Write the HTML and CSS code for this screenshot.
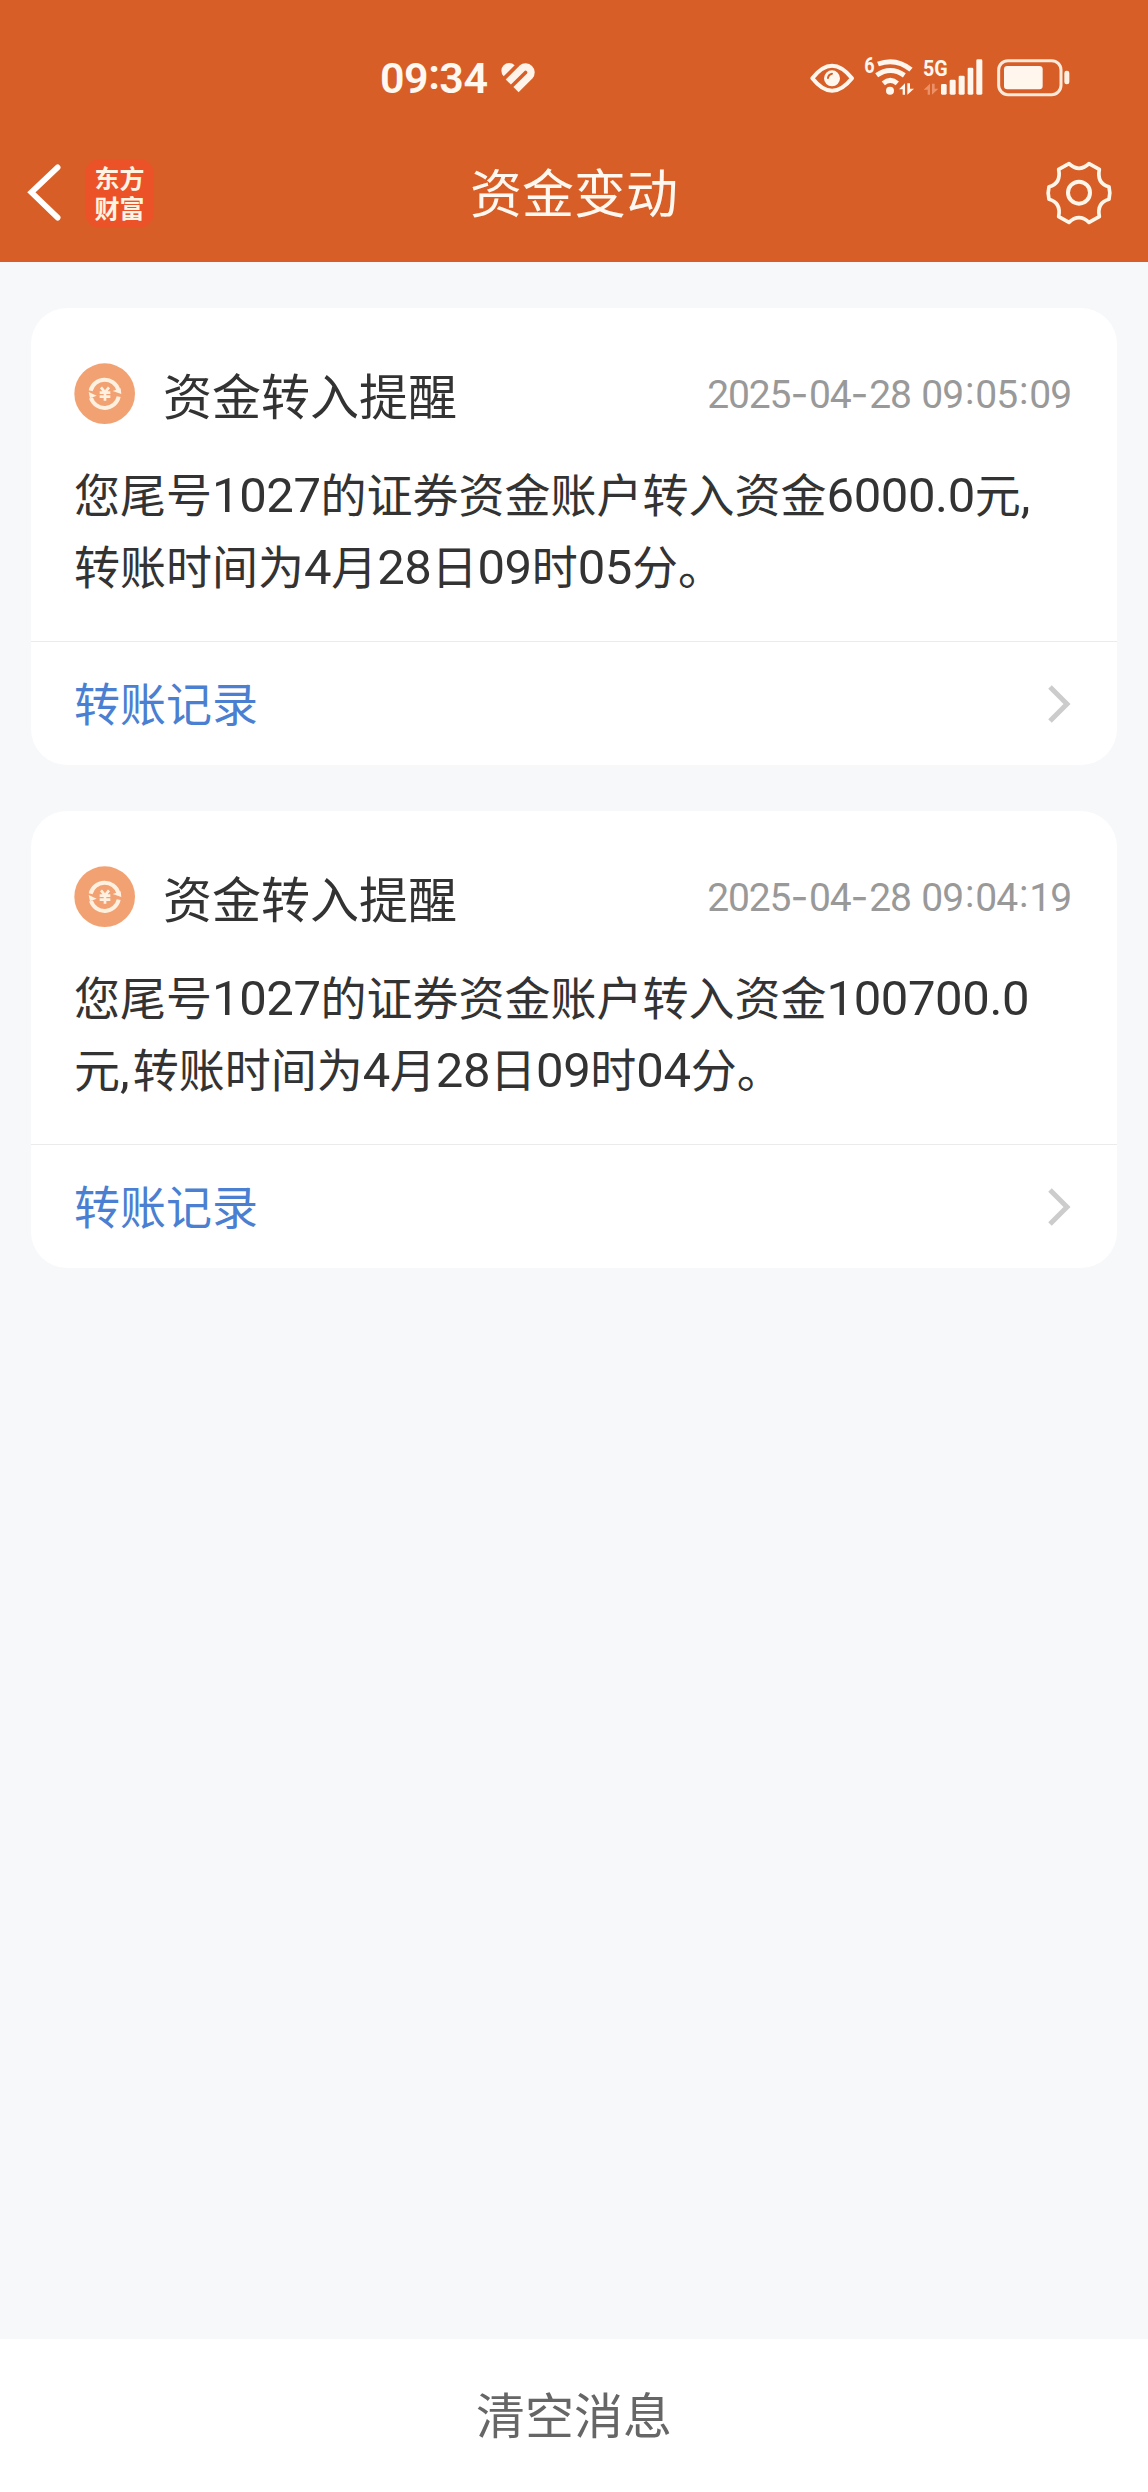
FILE: index.html
```html
<!DOCTYPE html>
<html lang="zh-CN">
<head>
  <meta charset="UTF-8">
  <meta name="viewport" content="width=device-width, initial-scale=1.0">
  <title>资金变动</title>
  <link rel="stylesheet" href="styles.css">
</head>
<body>
  <header class="header">
    <div class="status-bar">
      <div class="status-left">
        <span class="clock">09<span class="colon">:</span>34</span>
        <svg class="heart" width="36" height="32" viewBox="12 12 108 96">
          <path d="M23 55 A23 23 0 0 1 56 22Z" fill="#fff3ea"/>
          <path d="M37 72 L78 31 A16.3 16.3 0 0 1 101 54 L60 95" fill="none" stroke="#fff3ea" stroke-width="22"/>
        </svg>
      </div>
      <div class="status-right">
        <svg width="44" height="40" viewBox="60 54 132 120">
          <path d="M67 115 Q126 40 186 115 Q126 190 67 115Z" fill="none" stroke="#fff6ee" stroke-width="12" stroke-linejoin="round"/>
          <circle cx="126" cy="115" r="24" fill="#fff6ee"/>
          <path d="M114 114 Q115 103 126 101" fill="none" stroke="#d75f27" stroke-width="6" stroke-linecap="round"/>
        </svg>
        <svg class="wifi" width="51" height="40" viewBox="222 54 153 120">
          <text class="net-label" x="223" y="99" textLength="31" lengthAdjust="spacingAndGlyphs">6</text>
          <g fill="none" stroke="#fff6ee" stroke-width="15">
            <path d="M264 72 Q318 52 363 89"/>
            <path d="M260 106 Q301 77 343 106"/>
            <path d="M280 130 Q301 112 322 130"/>
          </g>
          <circle cx="300" cy="152" r="12" fill="#fff6ee"/>
          <path d="M327 148 L345 130 V164 H338 V148Z M352 130 V164 L372 146 H360 V130Z" fill="#fff6ee"/>
        </svg>
        <svg class="signal" width="60" height="40" viewBox="400 54 180 120">
          <text class="net-label" x="400" y="108" textLength="74" lengthAdjust="spacingAndGlyphs">5G</text>
          <path d="M402 149 L421 131 V164 H414 V149Z M427 131 V164 L446 146 H435 V131Z" fill="#ec9068"/>
          <g fill="#fff6ee">
            <rect x="454" y="132" width="17" height="32" rx="4"/>
            <rect x="480" y="119" width="18" height="45" rx="4"/>
            <rect x="507" y="107" width="18" height="57" rx="4"/>
            <rect x="534" y="83" width="17" height="81" rx="4"/>
            <rect x="560" y="58" width="18" height="106" rx="4"/>
          </g>
        </svg>
        <svg class="battery" width="73" height="40" viewBox="620 54 219 120">
          <rect x="625" y="62" width="187" height="102" rx="28" fill="none" stroke="#ffe9da" stroke-width="9"/>
          <rect x="641" y="78" width="116" height="70" rx="10" fill="#fff6ee"/>
          <rect x="822" y="92" width="15" height="41" rx="7" fill="#fff0e4"/>
        </svg>
      </div>
    </div>

    <nav class="nav">
      <div class="nav-left">
        <svg width="34" height="60" viewBox="80 70 102 180">
          <path d="M172 83 L93 158 L172 234" fill="none" stroke="#fff" stroke-width="17" stroke-linecap="round"/>
        </svg>
        <div class="logo">东方<br>财富</div>
      </div>
      <h1 class="nav-title">资金变动</h1>
      <svg class="gear" width="66" height="66" viewBox="78 57 198 198">
        <path d="M147 68 Q177 96 207 68 L238 85 Q230 128 267 137 Q272 156 267 175 Q230 185 238 227 L207 244 Q177 216 147 244 L116 227 Q124 185 87 175 Q82 156 87 137 Q124 128 116 85Z" fill="none" stroke="#fff6ea" stroke-width="11" stroke-linejoin="round"/>
        <circle cx="177" cy="155" r="33" fill="none" stroke="#fff6ea" stroke-width="12"/>
      </svg>
    </nav>
  </header>

  <main class="list">
    <section class="card">
      <div class="card-head">
        <svg class="coin" width="62" height="62" viewBox="0 0 186 186">
          <circle cx="92" cy="92" r="91" fill="#f2a272"/>
          <g fill="none" stroke="#fff0e0" stroke-width="12">
            <path d="M50 83 A43 43 0 0 1 133 81"/>
            <path d="M134 101 A43 43 0 0 1 51 105"/>
          </g>
          <path d="M116 84 L140 76 L142 93Z M44 87 L68 98 L48 106Z" fill="#fff0e0"/>
          <path d="M81 73 L93 88 L105 73 M93 88 V113 M77 89 H109 M77 101 H109" fill="none" stroke="#fff0e0" stroke-width="8"/>
        </svg>
        <h2 class="card-title">资金转入提醒</h2>
        <time class="card-time">2025<span class="dash">-</span>04<span class="dash">-</span>28 09<span class="colon">:</span>05<span class="colon">:</span>09</time>
      </div>
      <p class="card-text">您尾号<span class="num">1027</span>的证券资金账户转入资金<span class="num">6000.0</span>元<span class="num comma">,</span><br>转账时间为<span class="num">4</span>月<span class="num">28</span>日<span class="num">09</span>时<span class="num">05</span>分。</p>
      <a class="card-link">
        <span>转账记录</span>
        <svg width="24" height="40" viewBox="0 0 24 40">
          <path d="M3 3 L20 20 L3 37" fill="none" stroke="#ccc" stroke-width="5"/>
        </svg>
      </a>
    </section>

    <section class="card">
      <div class="card-head">
        <svg class="coin" width="62" height="62" viewBox="0 0 186 186">
          <circle cx="92" cy="92" r="91" fill="#f2a272"/>
          <g fill="none" stroke="#fff0e0" stroke-width="12">
            <path d="M50 83 A43 43 0 0 1 133 81"/>
            <path d="M134 101 A43 43 0 0 1 51 105"/>
          </g>
          <path d="M116 84 L140 76 L142 93Z M44 87 L68 98 L48 106Z" fill="#fff0e0"/>
          <path d="M81 73 L93 88 L105 73 M93 88 V113 M77 89 H109 M77 101 H109" fill="none" stroke="#fff0e0" stroke-width="8"/>
        </svg>
        <h2 class="card-title">资金转入提醒</h2>
        <time class="card-time">2025<span class="dash">-</span>04<span class="dash">-</span>28 09<span class="colon">:</span>04<span class="colon">:</span>19</time>
      </div>
      <p class="card-text">您尾号<span class="num">1027</span>的证券资金账户转入资金<span class="num">100700.0</span><br>元<span class="num comma">,</span>转账时间为<span class="num">4</span>月<span class="num">28</span>日<span class="num">09</span>时<span class="num">04</span>分。</p>
      <a class="card-link">
        <span>转账记录</span>
        <svg width="24" height="40" viewBox="0 0 24 40">
          <path d="M3 3 L20 20 L3 37" fill="none" stroke="#ccc" stroke-width="5"/>
        </svg>
      </a>
    </section>
  </main>

  <footer class="footer">清空消息</footer>
</body>
</html>
```
FILE: styles.css
```css
* {
  box-sizing: border-box;
  margin: 0;
  padding: 0;
}

body {
  display: flex;
  flex-direction: column;
  min-height: 2492px;
  background-color: #f7f8fa;
  color: #333;
  font-family: "Noto Sans CJK SC", sans-serif;
}

svg {
  display: block;
  flex-shrink: 0;
  overflow: visible;
}

/* header */
.header {
  height: 262px;
  background-color: #d75f27;
  color: #fff8f0;
}

.status-bar {
  display: flex;
  justify-content: space-between;
  align-items: center;
  height: 124px;
  padding: 32px 78px 0 380px;
}

.status-left,
.status-right {
  display: flex;
  align-items: center;
}

.clock {
  width: 108px;
  font-family: Roboto, sans-serif;
  font-size: 43px;
  font-weight: 600;
  letter-spacing: -0.5px;
  line-height: 1;
  white-space: nowrap;
}

.clock .colon {
  vertical-align: 4px;
  line-height: 0;
}

.heart {
  margin-left: 12px;
}

.wifi {
  margin-left: 10px;
}

.signal {
  margin-left: 8px;
}

.battery {
  margin-left: 14px;
}

.net-label {
  font-family: Roboto, sans-serif;
  font-size: 66px;
  font-weight: 700;
  fill: #fff6ee;
}

.nav {
  display: grid;
  grid-template-columns: 1fr auto 1fr;
  align-items: center;
  height: 138px;
  padding: 0 36px;
}

.nav-left {
  display: flex;
  align-items: center;
  gap: 24px;
  margin-left: -9px;
}

.logo {
  width: 69px;
  height: 69px;
  padding-top: 3px;
  border-radius: 15px;
  background-color: #eb5228;
  color: #fff3e2;
  font-size: 25px;
  font-weight: 700;
  line-height: 30px;
  text-align: center;
}

.nav-title {
  padding-bottom: 4px;
  font-size: 52px;
  font-weight: 400;
  line-height: 76px;
}

.gear {
  justify-self: end;
}

/* message cards */
.list {
  flex: 1;
  display: flex;
  flex-direction: column;
  gap: 46px;
  padding: 46px 31px 0;
}

.card {
  display: flex;
  flex-direction: column;
  height: 457px;
  border-radius: 36px;
  background-color: #fff;
}

.card-head {
  display: flex;
  align-items: center;
  height: 62px;
  margin-top: 55px;
  padding: 0 46px 0 43px;
}

.card-title {
  flex: 1;
  margin-left: 27px;
  font-size: 49px;
  font-weight: 400;
  line-height: 62px;
}

.card-time {
  color: #999;
  font-family: Roboto, sans-serif;
  font-size: 39px;
  letter-spacing: -1.1px;
  word-spacing: 2px;
  white-space: nowrap;
}

.card-time .dash {
  font-family: Inter, sans-serif;
  letter-spacing: 0.6px;
}

.card-time .colon {
  margin: 0 2px;
  vertical-align: 4px;
  line-height: 0;
}

.card-text {
  flex: 1;
  padding: 31px 0 0 43px;
  font-size: 46px;
  line-height: 72px;
  white-space: nowrap;
}

.num {
  font-family: Roboto, sans-serif;
  font-size: 49px;
  letter-spacing: -0.4px;
  line-height: 0;
}

.comma {
  letter-spacing: 3px;
}

.card-link {
  display: flex;
  justify-content: space-between;
  align-items: center;
  height: 124px;
  padding: 0 46px 0 43px;
  border-top: 1px solid #ebebeb;
  color: #4b7fd1;
  font-size: 46px;
}

.card-link span {
  padding-bottom: 5px;
}

.footer {
  height: 153px;
  background-color: #fff;
  color: #666;
  font-size: 49px;
  line-height: 147px;
  text-align: center;
}
```
